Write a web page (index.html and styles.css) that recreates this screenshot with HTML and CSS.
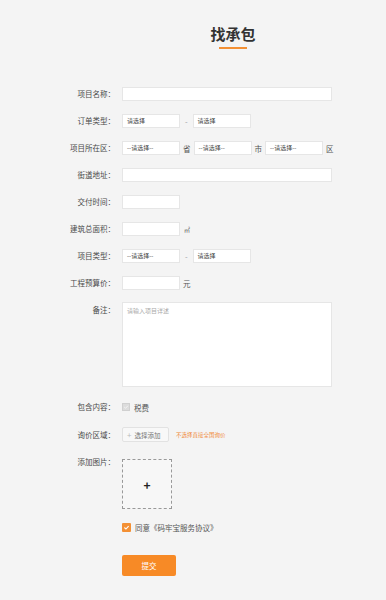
FILE: index.html
```html
<!DOCTYPE html>
<html lang="zh-CN">
<head>
    <meta charset="UTF-8">
    <meta name="viewport" content="width=device-width, initial-scale=1.0">
    <title>找承包</title>
    <link rel="stylesheet" href="styles.css">
</head>
<body>
    <div class="header">
        <h2>找承包</h2>
        <span class="underline"></span>
    </div>

    <!-- 表单 -->
    <div class="form">
        <div class="row">
            <label class="label">项目名称：</label>
            <div class="field long"></div>
        </div>
        <div class="row">
            <label class="label">订单类型：</label>
            <div class="field select">请选择</div>
            <span class="unit dash">-</span>
            <div class="field select">请选择</div>
        </div>
        <div class="row">
            <label class="label">项目所在区：</label>
            <div class="field select">--请选择--</div>
            <span class="unit">省</span>
            <div class="field select">--请选择--</div>
            <span class="unit">市</span>
            <div class="field select">--请选择--</div>
            <span class="unit">区</span>
        </div>
        <div class="row">
            <label class="label">街道地址：</label>
            <div class="field long"></div>
        </div>
        <div class="row">
            <label class="label">交付时间：</label>
            <div class="field short"></div>
        </div>
        <div class="row">
            <label class="label">建筑总面积：</label>
            <div class="field short"></div>
            <span class="unit sq">㎡</span>
        </div>
        <div class="row">
            <label class="label">项目类型：</label>
            <div class="field select">--请选择--</div>
            <span class="unit dash">-</span>
            <div class="field select">请选择</div>
        </div>
        <div class="row">
            <label class="label">工程预算价：</label>
            <div class="field short"></div>
            <span class="unit">元</span>
        </div>
        <div class="row top">
            <label class="label">备注：</label>
            <div class="field textarea">请输入项目详述</div>
        </div>
        <div class="row gap-lg">
            <label class="label">包含内容：</label>
            <span class="check gray">
                <svg width="6" height="6" viewBox="0 0 10 10"><path d="M2 5 L4.2 7.2 L8 3" fill="none" stroke="#f4f4f4" stroke-width="1.6"/></svg>
            </span>
            <span class="check-text">税费</span>
        </div>
        <div class="row">
            <label class="label">询价区域：</label>
            <div class="add-btn"><span class="plus">+</span>选择添加</div>
            <span class="hint">不选择直接全国询价</span>
        </div>
        <div class="row top">
            <label class="label">添加图片：</label>
            <div class="upload">+</div>
        </div>
        <div class="row agree">
            <span class="label"></span>
            <span class="check orange">
                <svg width="7" height="7" viewBox="0 0 10 10"><path d="M2 5 L4.2 7.2 L8 3" fill="none" stroke="#fff" stroke-width="1.6"/></svg>
            </span>
            <span class="check-text">同意《码牢宝服务协议》</span>
        </div>
        <div class="row submit-row">
            <span class="label"></span>
            <button class="submit">提交</button>
        </div>
    </div>
</body>
</html>
```

FILE: styles.css
```css
body {
    margin: 0;
    background: #f4f4f4;
    font-family: "Noto Sans CJK SC", "Noto Sans", sans-serif;
    color: #444;
}
.header {
    padding: 23px 0 0 80px;
    text-align: center;
    height: 63px;
    box-sizing: border-box;
}
.header h2 {
    margin: 0;
    font-size: 15px;
    line-height: 22px;
    font-weight: bold;
    color: #333;
}
.underline {
    display: block;
    width: 28px;
    height: 2px;
    margin: 2px auto 0;
    background: #f39034;
}
.form {
    padding-top: 24px;
}
.row {
    display: flex;
    align-items: center;
    margin-bottom: 13px;
    font-size: 7.5px;
}
.row.top {
    align-items: flex-start;
}
.label {
    width: 115px;
    margin-right: 7px;
    text-align: right;
    color: #4a4a4a;
    line-height: 14px;
}
.field {
    height: 14px;
    box-sizing: border-box;
    background: #fff;
    border: 1px solid #e6e6e6;
}
.long {
    width: 210px;
}
.short {
    width: 58px;
}
.select {
    width: 58px;
    padding-left: 4px;
    font-size: 6px;
    line-height: 12px;
    color: #444;
}
.unit {
    margin: 0 3px;
    color: #555;
    font-size: 7.5px;
}
.unit.dash {
    margin: 0 5px;
    color: #999;
}
.unit.sq {
    margin: 0 4px;
    font-size: 6px;
}
.textarea {
    width: 210px;
    height: 85px;
    margin-top: -1px;
    padding: 3px 4px;
    font-size: 6px;
    line-height: 10px;
    color: #aaa;
}
.gap-lg {
    margin-top: 12px;
    margin-bottom: 13px;
}
.check {
    display: inline-flex;
    align-items: center;
    justify-content: center;
    width: 8px;
    height: 8px;
    box-sizing: border-box;
}
.check.gray {
    background: #dcdcdc;
    border: 1px solid #d0d0d0;
}
.check.orange {
    width: 9px;
    height: 9px;
    border-radius: 1px;
    background: #f39034;
}
.check-text {
    margin-left: 4px;
    color: #555;
}
.add-btn {
    height: 15px;
    width: 47px;
    box-sizing: border-box;
    border: 1px solid #e2e2e2;
    background: #f8f8f8;
    border-radius: 2px;
    font-size: 6.5px;
    line-height: 13px;
    color: #777;
    padding-left: 4px;
}
.plus {
    color: #bbb;
    margin-right: 3px;
    font-size: 8px;
}
.hint {
    margin-left: 7px;
    font-size: 5.5px;
    color: #f08a3a;
}
.upload {
    width: 50px;
    height: 50px;
    box-sizing: border-box;
    margin-top: 4px;
    border: 1px dashed #999;
    background: #f7f7f7;
    display: flex;
    align-items: center;
    justify-content: center;
    font-size: 12px;
    font-weight: bold;
    color: #222;
}
.agree {
    margin-top: 11px;
    margin-bottom: 22px;
}
.submit {
    width: 54px;
    height: 21px;
    border: none;
    border-radius: 2px;
    background: #f78a26;
    color: #fff;
    font-family: "Noto Sans CJK SC", sans-serif;
    font-size: 7.5px;
    padding: 0;
}
```
